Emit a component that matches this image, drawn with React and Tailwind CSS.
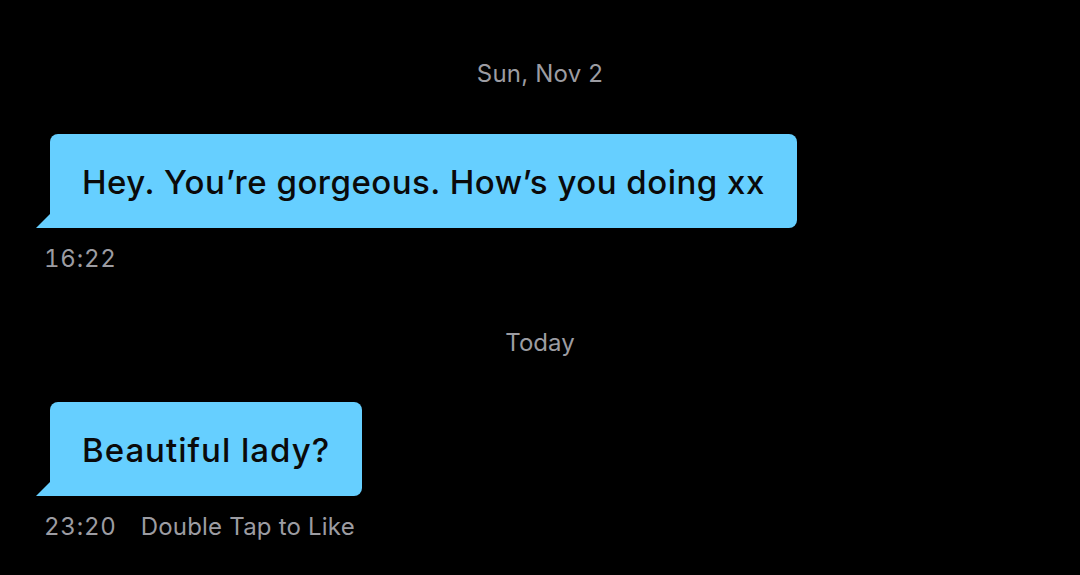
export default function App() {
  const font = { fontFamily: 'Inter, "Noto Sans", sans-serif' };
  const Bubble = ({ children, track }) => (
    <div className="relative self-start ml-[50px]">
      <div className={"h-[94px] flex items-center pt-[4px] px-[32px] bg-[#66cfff] rounded-t-[8px] rounded-br-[8px] text-[33px] font-medium text-[#0a0a0a] whitespace-nowrap " + track}>
        {children}
      </div>
      <svg className="absolute left-[-14px] bottom-0" width="15" height="15" viewBox="0 0 15 15">
        <path d="M0 15 L14 1 L15 1 L15 15 Z" fill="#66cfff" />
      </svg>
    </div>
  );
  return (
    <div className="w-[1080px] h-[575px] bg-black flex flex-col overflow-hidden" style={font}>
      <div className="pt-[58px] h-[90px] leading-[32px] text-center text-[24px] tracking-[0.2px] text-[#9c9ca2]">Sun, Nov 2</div>
      <div className="mt-[44px] flex flex-col">
        <Bubble track="tracking-[0.5px]">Hey. You’re gorgeous. How’s you doing xx</Bubble>
      </div>
      <div className="mt-[15px] ml-[44px] leading-[32px] text-[24px] tabular-nums tracking-[0.8px] text-[#9c9ca2]">16:22</div>
      <div className="mt-[52px] leading-[32px] text-center text-[24px] text-[#9c9ca2]">Today</div>
      <div className="mt-[43px] flex flex-col">
        <Bubble track="tracking-[1px]">Beautiful lady?</Bubble>
      </div>
      <div className="mt-[15px] ml-[44px] leading-[32px] text-[24px] text-[#9c9ca2] flex gap-[24px]">
        <span className="tabular-nums tracking-[0.8px]">23:20</span>
        <span className="tracking-[0.2px]">Double Tap to Like</span>
      </div>
    </div>
  );
}
